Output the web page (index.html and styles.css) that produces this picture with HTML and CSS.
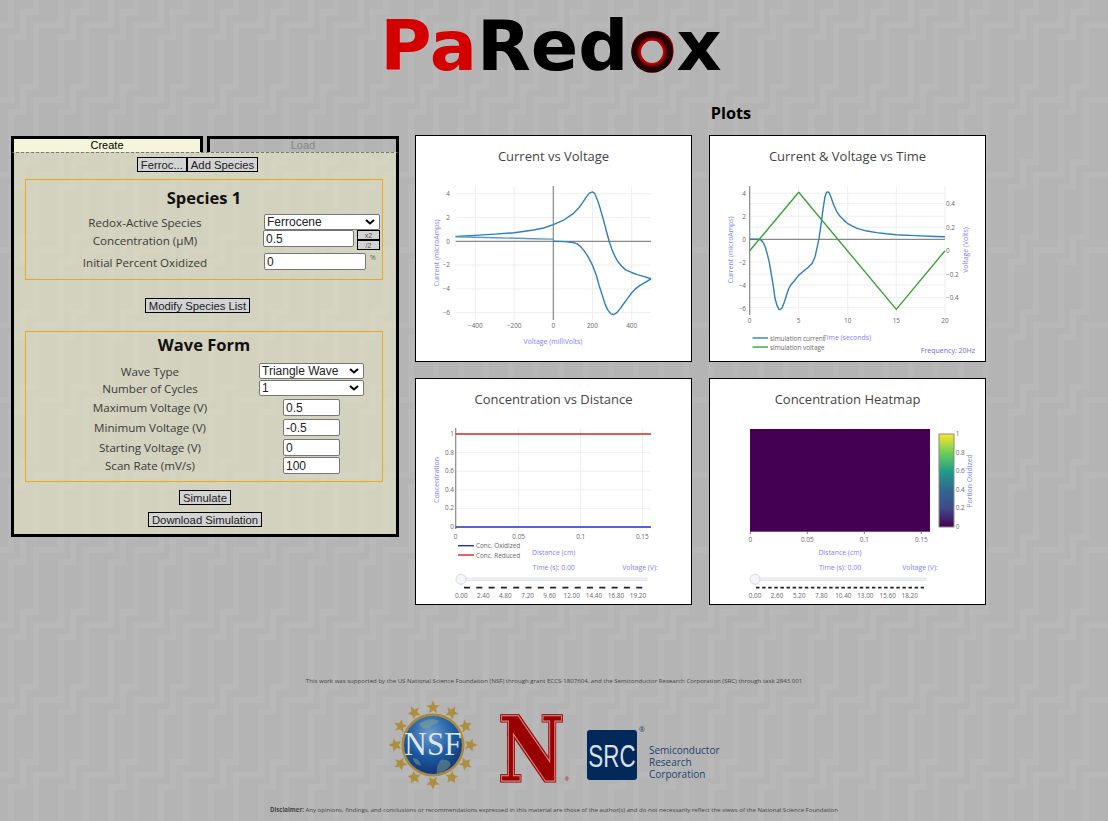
FILE: index.html
```html
<!DOCTYPE html>
<html lang="en">
<head>
  <meta charset="UTF-8" />
  <title>PaRedox</title>
  <link rel="stylesheet" href="styles.css">
</head>
<body>
  <header class="site-header">
    <h1 class="logo"><span class="logo-pa">Pa</span>Red<span class="logo-o">o<svg class="logo-ring" viewBox="0 0 44 44">
      <defs>
        <radialGradient id="ringFill" cx="50%" cy="50%" r="50%">
          <stop offset="52%" stop-color="#3a0000"/>
          <stop offset="72%" stop-color="#d00000"/>
          <stop offset="100%" stop-color="#200000"/>
        </radialGradient>
      </defs>
      <circle cx="22" cy="22" r="16" fill="none" stroke="url(#ringFill)" stroke-width="9.5"/>
      <circle cx="22" cy="22" r="11" fill="#b5b5b5"/>
    </svg></span>x</h1>
  </header>

  <main class="main">
    <section class="sim-panel">
      <div class="tabs">
        <div class="tab tab-active">Create</div>
        <div class="tab tab-off">Load</div>
      </div>
      <div class="tab-body">
        <div class="btn-row btn-row-left">
          <button type="button" class="btn">Ferroc...</button><button type="button" class="btn">Add Species</button>
        </div>

        <fieldset class="box species-box">
          <h2 class="box-title">Species 1</h2>
          <div class="row species-row">
            <label>Redox-Active Species</label>
            <select class="field field-select"><option>Ferrocene</option></select>
          </div>
          <div class="row species-row conc-row">
            <label>Concentration (µM)</label>
            <div class="conc-controls">
              <input class="field conc-input" type="text" value="0.5" />
              <div class="scale-btns">
                <button type="button" class="scale-btn">x2</button>
                <button type="button" class="scale-btn">/2</button>
              </div>
            </div>
          </div>
          <div class="row species-row pct-row">
            <label>Initial Percent Oxidized</label>
            <div class="pct-controls">
              <input class="field pct-input" type="text" value="0" />
              <span class="pct">%</span>
            </div>
          </div>
        </fieldset>

        <div class="btn-row btn-row-left modify-row">
          <button type="button" class="btn">Modify Species List</button>
        </div>

        <fieldset class="box wave-box">
          <h2 class="box-title">Wave Form</h2>
          <div class="row wave-row">
            <label>Wave Type</label>
            <select class="field field-select"><option>Triangle Wave</option></select>
          </div>
          <div class="row wave-row tight">
            <label>Number of Cycles</label>
            <select class="field field-select"><option>1</option></select>
          </div>
          <div class="row wave-row spaced">
            <label>Maximum Voltage (V)</label>
            <input class="field wave-input" type="text" value="0.5" />
          </div>
          <div class="row wave-row spaced">
            <label>Minimum Voltage (V)</label>
            <input class="field wave-input" type="text" value="-0.5" />
          </div>
          <div class="row wave-row spaced">
            <label>Starting Voltage (V)</label>
            <input class="field wave-input" type="text" value="0" />
          </div>
          <div class="row wave-row tight">
            <label>Scan Rate (mV/s)</label>
            <input class="field wave-input" type="text" value="100" />
          </div>
        </fieldset>

        <div class="btn-row simulate-row"><button type="button" class="btn">Simulate</button></div>
        <div class="btn-row download-row"><button type="button" class="btn">Download Simulation</button></div>
      </div>
    </section>

    <section class="plots">
      <h2 class="plots-title">Plots</h2>
      <div class="plot-grid">

        <!-- current vs voltage -->
        <div class="plot-card">
          <svg class="plot" viewBox="416 136 275 225">
            <text class="chart-title" x="553.5" y="161">Current vs Voltage</text>
            <path class="grid" d="M475.3 186V320M514.2 186V320M592.4 186V320M631.7 186V320M455.6 193.7H651M455.6 217.5H651M455.6 265.1H651M455.6 288.9H651M455.6 312.7H651"/>
            <path class="zero" d="M553.3 186V320M455.6 241.3H651"/>
            <g transform="translate(553.3 241.3) scale(.1955 -11.9)">
              <polyline class="line blue" points="-500,.4 -400,.5 -300,.6 -200,.72 -100,.95 -50,1.12 0,1.4 50,1.75 100,2.3 130,2.8 150,3.25 170,3.75 185,4.05 200,4.15 212,4.02 225,3.5 240,2.75 255,1.9 270,.95 285,.05 300,-.7 315,-1.25 330,-1.7 350,-2.1 370,-2.4 400,-2.62 430,-2.8 465,-2.97 500,-3.15"/>
              <polyline class="line blue" points="500,-3.15 470,-3.45 440,-3.75 420,-4 400,-4.35 380,-4.8 360,-5.25 340,-5.7 325,-6 310,-6.15 295,-6.1 280,-5.8 265,-5.3 250,-4.5 235,-3.75 220,-2.85 200,-2 180,-1.35 160,-.85 140,-.45 120,-.2 100,-.1 60,-.03 0,0"/>
              <polyline class="line blue-soft" points="-500,.38 -300,.3 -100,.22 0,.18"/>
            </g>
            <g class="tick tick-end">
              <text x="450" y="196">4</text><text x="450" y="220">2</text><text x="450" y="243.5">0</text><text x="450" y="267">−2</text><text x="450" y="291">−4</text><text x="450" y="315">−6</text>
            </g>
            <g class="tick tick-mid">
              <text x="475.3" y="328">−400</text><text x="514.2" y="328">−200</text><text x="553.3" y="328">0</text><text x="592.4" y="328">200</text><text x="631.7" y="328">400</text>
            </g>
            <text class="axis-title" x="553" y="344">Voltage (milliVolts)</text>
            <text class="axis-title" transform="translate(439 253) rotate(-90)">Current (microAmps)</text>
          </svg>
        </div>

        <!-- current and voltage vs time -->
        <div class="plot-card">
          <svg class="plot" viewBox="710 136 275 225">
            <text class="chart-title" x="847.5" y="161">Current &amp; Voltage vs Time</text>
            <path class="grid" d="M798.7 186V315M847.7 186V315M896.3 186V315M945 186V315M749.7 193.3H945M749.7 216.2H945M749.7 262.1H945M749.7 285H945M749.7 307.7H945M749.7 203.7H945M749.7 227.2H945M749.7 274.2H945M749.7 297.7H945"/>
            <path class="zero" d="M749.7 186V315M749.7 239.3H945"/>
            <g transform="translate(749.7 239.3) scale(9.77 -11.44)">
              <polyline class="line blue" points="0,0 .8,0 1,-.02 1.2,-.1 1.4,-.3 1.6,-.7 1.8,-1.3 2,-2 2.2,-3 2.4,-4 2.6,-5.2 2.8,-5.8 3,-6.12 3.1,-6.15 3.3,-6 3.5,-5.6 3.8,-4.8 4,-4.3 4.2,-4 4.6,-3.6 5,-3.15 5.5,-2.8 6,-2.45 6.4,-2.1 6.7,-1.5 6.9,-.7 7.1,.1 7.3,1.3 7.5,2.6 7.7,3.7 7.85,4.1 8,4.15 8.15,4.05 8.35,3.6 8.6,3 8.9,2.45 9.2,2.05 9.6,1.7 10,1.4 10.5,1.15 11,.95 12,.72 13,.58 14,.48 15,.4 17,.32 19,.25 20,.22"/>
            </g>
            <polyline class="line green" points="749.7,250.7 798.7,192.3 896.3,309.4 945,250.7"/>
            <g class="tick tick-end">
              <text x="746" y="196">4</text><text x="746" y="219">2</text><text x="746" y="242">0</text><text x="746" y="265">−2</text><text x="746" y="288">−4</text><text x="746" y="310.5">−6</text>
            </g>
            <g class="tick">
              <text x="946" y="206">0.4</text><text x="946" y="230">0.2</text><text x="946" y="253">0</text><text x="946" y="277">−0.2</text><text x="946" y="300">−0.4</text>
            </g>
            <g class="tick tick-mid">
              <text x="749.7" y="323">0</text><text x="798.7" y="323">5</text><text x="847.7" y="323">10</text><text x="896.3" y="323">15</text><text x="945" y="323">20</text>
            </g>
            <path class="line blue" d="M752.5 338H768"/>
            <path class="line green" d="M752.5 347H768"/>
            <text class="tick" x="770" y="341">simulation current</text>
            <text class="tick" x="770" y="350">simulation voltage</text>
            <text class="axis-title" x="847" y="339.5">Time (seconds)</text>
            <text class="freq" x="975" y="353">Frequency: 20Hz</text>
            <text class="axis-title" transform="translate(733 250) rotate(-90)">Current (microAmps)</text>
            <text class="axis-title" transform="translate(968 250) rotate(-90)">Voltage (Volts)</text>
          </svg>
        </div>

        <!-- concentration vs distance -->
        <div class="plot-card">
          <svg class="plot" viewBox="416 379 275 225">
            <text class="chart-title" x="553.5" y="404">Concentration vs Distance</text>
            <path class="grid" d="M518.7 428V527M580.7 428V527M642.3 428V527M455.7 452.6H651M455.7 471.2H651M455.7 489.8H651M455.7 508.4H651"/>
            <path class="zero" d="M455.7 428V529"/>
            <path class="line level red" d="M455.7 434H651"/>
            <path class="line level navy" d="M455.7 527H651"/>
            <g class="tick tick-end">
              <text x="454" y="436">1</text><text x="454" y="454.6">0.8</text><text x="454" y="473.2">0.6</text><text x="454" y="491.8">0.4</text><text x="454" y="510.4">0.2</text><text x="454" y="529">0</text>
            </g>
            <g class="tick tick-mid">
              <text x="455.7" y="539">0</text><text x="518.7" y="539">0.05</text><text x="580.7" y="539">0.1</text><text x="642.3" y="539">0.15</text>
            </g>
            <path class="line navy" d="M458 545.7H474"/>
            <path class="line red" d="M458 555H474"/>
            <text class="tick" x="476" y="548">Conc. Oxidized</text>
            <text class="tick" x="476" y="558">Conc. Reduced</text>
            <text class="axis-title" x="553.7" y="555">Distance (cm)</text>
            <text class="axis-title" transform="translate(439 480) rotate(-90)">Concentration</text>
            <text class="axis-title" x="553.7" y="570">Time (s): 0.00</text>
            <text class="axis-title" x="640" y="570">Voltage (V):</text>
            <rect class="track" x="461" y="578" width="186" height="2.5"/>
            <circle class="handle" cx="461" cy="579.3" r="5"/>
            <path class="dash-wide" d="M464 587.7H643"/>
            <g class="tick tick-mid">
              <text x="461.3" y="598">0.00</text><text x="483.3" y="598">2.40</text><text x="505.3" y="598">4.80</text><text x="527.7" y="598">7.20</text><text x="549.7" y="598">9.60</text><text x="571.7" y="598">12.00</text><text x="594" y="598">14.40</text><text x="616" y="598">16.80</text><text x="638" y="598">19.20</text>
            </g>
          </svg>
        </div>

        <!-- heatmap -->
        <div class="plot-card">
          <svg class="plot" viewBox="710 379 275 225">
            <defs>
              <linearGradient id="viridis" x1="0" y1="1" x2="0" y2="0">
                <stop offset="0" stop-color="#440154"/>
                <stop offset=".2" stop-color="#3e4a89"/>
                <stop offset=".4" stop-color="#31688e"/>
                <stop offset=".6" stop-color="#1f9e89"/>
                <stop offset=".8" stop-color="#6ece58"/>
                <stop offset="1" stop-color="#fde725"/>
              </linearGradient>
            </defs>
            <text class="chart-title" x="847.5" y="404">Concentration Heatmap</text>
            <rect class="heat" x="750" y="429" width="180" height="102.7"/>
            <path class="tick-mark" d="M750.3 531.7V534M807.3 531.7V534M864.3 531.7V534M921.3 531.7V534"/>
            <rect class="colorbar" x="939" y="434" width="15" height="93"/>
            <g class="tick">
              <text x="955.7" y="436">1</text><text x="955.7" y="454.6">0.8</text><text x="955.7" y="473.2">0.6</text><text x="955.7" y="491.8">0.4</text><text x="955.7" y="510.4">0.2</text><text x="955.7" y="529">0</text>
            </g>
            <g class="tick tick-mid">
              <text x="750.3" y="542">0</text><text x="807.3" y="542">0.05</text><text x="864.3" y="542">0.1</text><text x="921.3" y="542">0.15</text>
            </g>
            <text class="axis-title" x="840" y="555">Distance (cm)</text>
            <text class="axis-title" transform="translate(972 481) rotate(-90)">Portion Oxidized</text>
            <text class="axis-title" x="840" y="570">Time (s): 0.00</text>
            <text class="axis-title" x="920" y="570">Voltage (V):</text>
            <rect class="track" x="755" y="578" width="171" height="2.5"/>
            <circle class="handle" cx="755" cy="579.3" r="5"/>
            <path class="dash-narrow" d="M756 587.7H924"/>
            <g class="tick tick-mid">
              <text x="755" y="598">0.00</text><text x="777" y="598">2.60</text><text x="799.3" y="598">5.20</text><text x="821.3" y="598">7.80</text><text x="843.3" y="598">10.40</text><text x="865.3" y="598">13.00</text><text x="887.7" y="598">15.60</text><text x="909.7" y="598">18.20</text>
            </g>
          </svg>
        </div>

      </div>
    </section>
  </main>

  <footer class="site-footer">
    <p class="support">This work was supported by the US National Science Foundation (NSF) through grant ECCS-1807604, and the Semiconductor Research Corporation (SRC) through task 2843.001</p>
    <div class="sponsors">
      <svg class="logo-nsf" viewBox="0 0 88 90">
        <defs>
          <radialGradient id="globe" cx="45%" cy="30%" r="75%">
            <stop offset="0" stop-color="#6a9ccc"/>
            <stop offset=".55" stop-color="#1c5aa0"/>
            <stop offset="1" stop-color="#122f70"/>
          </radialGradient>
          <polygon id="star" points="0,-44.5 1.9,-40 6.5,-39.6 3,-36.5 4,-32 0,-34.4 -4,-32 -3,-36.5 -6.5,-39.6 -1.9,-40"/>
        </defs>
        <circle cx="44" cy="45" r="30" fill="none" stroke="#a98a3c" stroke-width="3"/>
        <g transform="translate(44 45)" fill="#ad8e3e">
          <use href="#star"/>
          <use href="#star" transform="rotate(30)"/>
          <use href="#star" transform="rotate(60)"/>
          <use href="#star" transform="rotate(90)"/>
          <use href="#star" transform="rotate(120)"/>
          <use href="#star" transform="rotate(150)"/>
          <use href="#star" transform="rotate(180)"/>
          <use href="#star" transform="rotate(210)"/>
          <use href="#star" transform="rotate(240)"/>
          <use href="#star" transform="rotate(270)"/>
          <use href="#star" transform="rotate(300)"/>
          <use href="#star" transform="rotate(330)"/>
        </g>
        <circle cx="44" cy="45" r="29" fill="url(#globe)"/>
        <path class="land" d="M30 24c6-5 14-6 20-3-2 4-7 3-9 6-3 3-8 2-11-3zM52 60c6-1 11 2 9 6-3 4-8 7-13 8-1-5 1-11 4-14zM24 58c4 0 7 3 8 8l-5-2c-2-2-3-4-3-6z"/>
        <text class="nsf-text" transform="translate(44 55) scale(.92 1)">NSF</text>
      </svg>

      <svg class="logo-n" viewBox="0 0 72 110">
        <defs>
          <filter id="nEdge" x="-10%" y="-10%" width="120%" height="120%">
            <feMorphology in="SourceAlpha" operator="dilate" radius="1.2" result="fat"/>
            <feFlood flood-color="#990000"/>
            <feComposite in2="fat" operator="in" result="edge"/>
            <feMerge>
              <feMergeNode in="edge"/>
              <feMergeNode in="SourceGraphic"/>
            </feMerge>
          </filter>
        </defs>
        <text class="n-glyph" transform="translate(32.5 88) scale(.8 1)">N</text>
        <text class="n-reg" x="66" y="88">®</text>
      </svg>

      <div class="src">
        <svg class="src-mark" viewBox="0 0 50 50">
          <rect width="50" height="50" rx="3" fill="#02295a"/>
          <text class="src-letters" transform="translate(25 36.5) scale(.7 1)">SRC</text>
        </svg>
        <span class="src-reg">®</span>
        <div class="src-name">Semiconductor<br>Research<br>Corporation</div>
      </div>
    </div>
    <p class="disclaimer"><strong>Disclaimer:</strong> Any opinions, findings, and conclusions or recommendations expressed in this material are those of the author(s) and do not necessarily reflect the views of the National Science Foundation</p>
  </footer>
</body>
</html>
```

FILE: styles.css
```css
* {
  box-sizing: border-box;
}

html, body {
  height: 100%;
}

body {
  margin: 0;
  overflow: hidden;
  font-family: "Open Sans", "Noto Sans", sans-serif;
  color: #000;
  background-color: #b4b4b4;
  background-image: url("data:image/svg+xml,%3Csvg xmlns='http://www.w3.org/2000/svg' width='50' height='75'%3E%3Cpath d='M11 75V37H23V12H36V0M36 75V25H50M0 25H11V0' fill='none' stroke='%23b8b8b8' stroke-width='6'/%3E%3C/svg%3E");
}

/* header */
.site-header {
  height: 97px;
  text-align: center;
}

.logo {
  margin: 0;
  padding-top: 6px;
  padding-right: 6px;
  font-family: "DejaVu Sans", sans-serif;
  font-size: 70px;
  font-weight: bold;
  line-height: 80px;
  color: #000;
}

.logo-pa {
  color: #d40000;
}

.logo-o {
  position: relative;
  color: #8a0000;
}

.logo-ring {
  position: absolute;
  left: 2px;
  top: 25px;
  width: 44px;
  height: 44px;
}

/* main layout */
.main {
  display: flex;
  align-items: flex-start;
  padding-left: 11px;
}

.sim-panel {
  width: 388px;
  margin-top: 39px;
  margin-right: 16px;
  flex: none;
}

.tabs {
  display: flex;
  justify-content: space-between;
  height: 16px;
}

.tab {
  width: 192px;
  border: 3px solid #000;
  border-bottom: none;
  font-family: "Liberation Sans", Arial, sans-serif;
  font-size: 11px;
  line-height: 13px;
  text-align: center;
}

.tab-active {
  background-color: #f5f5dc;
}

.tab-off {
  color: #858585;
}

.tab-body {
  height: 385px;
  padding-top: 4px;
  border: 3px solid #000;
  border-top: 1px dashed #777;
  background-color: rgba(240, 240, 200, 0.5);
}

.btn-row {
  display: flex;
  justify-content: center;
}

.btn-row-left {
  padding-right: 15px;
}

.modify-row {
  margin-top: 18px;
}

.simulate-row {
  margin-top: 8px;
}

.download-row {
  margin-top: 7px;
}

.btn {
  height: 15px;
  padding: 0 3px;
  border: 1px solid #000;
  background-color: #d3d3d3;
  color: #222;
  font-family: "Liberation Sans", Arial, sans-serif;
  font-size: 11.3px;
  line-height: 12px;
  white-space: nowrap;
}

.box {
  display: block;
  width: 358px;
  margin: 7px 0 0 11px;
  padding: 0;
  border: 1px solid #eda71c;
  min-width: 0;
}

.species-box {
  height: 101px;
}

.wave-box {
  height: 151px;
  margin-top: 18px;
}

.box-title {
  margin: 0;
  font-size: 16.5px;
  font-weight: bold;
  line-height: 24px;
  text-align: center;
  color: #111;
}

.species-box .box-title {
  padding-top: 6px;
  height: 33px;
}

.wave-box .box-title {
  padding-top: 1px;
  height: 31px;
}

.row {
  display: grid;
  align-items: center;
}

.row label {
  font-size: 11.6px;
  color: #3a3a3a;
  text-align: center;
  white-space: nowrap;
}

.species-row {
  grid-template-columns: 238px 116px;
  height: 16px;
}

.species-row label {
  padding-top: 2px;
}

.conc-row {
  height: 20px;
  margin-top: 1px;
  align-items: start;
}

.conc-row label {
  padding-top: 3px;
}

.pct-row {
  height: 17px;
  margin-top: 3px;
}

.wave-row {
  grid-template-columns: 233px 105px;
  height: 16px;
}

.wave-row label {
  padding-left: 15px;
}

.tight {
  margin-top: 1px;
}

.spaced {
  margin-top: 3px;
}

.wave-row.spaced,
.wave-row:last-child {
  height: 17px;
}

.field {
  height: 17px;
  padding: 0 2px;
  border: 1px solid #767676;
  border-radius: 2px;
  background-color: #fff;
  color: #222;
  font-family: "Liberation Sans", Arial, sans-serif;
  font-size: 12px;
}

.field-select {
  width: 100%;
  height: 16px;
  appearance: none;
  background-image: url("data:image/svg+xml,%3Csvg xmlns='http://www.w3.org/2000/svg' width='10' height='6'%3E%3Cpath d='M1 1l4 3.5L9 1' fill='none' stroke='%23000' stroke-width='2'/%3E%3C/svg%3E");
  background-repeat: no-repeat;
  background-position: right 4px center;
}

.conc-controls {
  display: flex;
  margin-left: -1px;
}

.conc-input {
  width: 91px;
}

.scale-btns {
  margin-left: 3px;
}

.scale-btn {
  display: block;
  width: 23px;
  height: 10px;
  padding: 0;
  border: 1px solid #000;
  background-color: #d3d3d3;
  color: #555;
  font-family: "Liberation Sans", Arial, sans-serif;
  font-size: 7px;
  line-height: 7px;
}

.pct-controls {
  display: flex;
  align-items: flex-start;
}

.pct-input {
  width: 102px;
}

.pct {
  margin-left: 4px;
  font-size: 7px;
  color: #666;
}

.wave-input {
  width: 57px;
  justify-self: center;
}

/* plots */
.plots {
  width: 632px;
}

.plots-title {
  margin: 0;
  height: 38px;
  padding-top: 4px;
  font-size: 16.3px;
  font-weight: bold;
  line-height: 24px;
  text-align: center;
}

.plot-grid {
  display: grid;
  grid-template-columns: 277px 277px;
  grid-template-rows: 227px 227px;
  column-gap: 17px;
  row-gap: 16px;
}

.plot-card {
  border: 1px solid #000;
  background-color: #fff;
}

.plot {
  display: block;
  width: 275px;
  height: 225px;
  font-family: "Open Sans", sans-serif;
}

.chart-title {
  font-size: 13px;
  fill: #444;
  text-anchor: middle;
}

.tick {
  font-size: 6.4px;
  fill: #666;
}

.tick-end {
  text-anchor: end;
}

.tick-mid {
  text-anchor: middle;
}

.axis-title {
  font-size: 6.9px;
  fill: #8080ff;
  text-anchor: middle;
}

.freq {
  font-size: 7px;
  fill: #6a6ad8;
  text-anchor: end;
}

.grid {
  fill: none;
  stroke: #eee;
  stroke-width: 1;
}

.zero {
  fill: none;
  stroke: #888;
  stroke-width: 1.2;
}

.line {
  fill: none;
  stroke-width: 1.4;
  stroke-linejoin: round;
  vector-effect: non-scaling-stroke;
}

.level {
  stroke-width: 1.7;
}

.blue {
  stroke: #2f7fb8;
}

.blue-soft {
  stroke: #5b9ac8;
}

.green {
  stroke: #3aa23a;
}

.red {
  stroke: #d62728;
}

.navy {
  stroke: #1f2fc0;
}

.heat {
  fill: #440154;
}

.colorbar {
  fill: url(#viridis);
  stroke: #888;
  stroke-width: 1;
}

.tick-mark {
  fill: none;
  stroke: #555;
  stroke-width: 0.8;
}

.track {
  fill: #f0f2f7;
  stroke: #d5dae8;
  stroke-width: 0.7;
}

.handle {
  fill: #f4f6fa;
  stroke: #d5dae8;
  stroke-width: 1;
}

.dash-wide {
  fill: none;
  stroke: #222;
  stroke-width: 1.8;
  stroke-dasharray: 6 6.3;
}

.dash-narrow {
  fill: none;
  stroke: #222;
  stroke-width: 1.8;
  stroke-dasharray: 3.5 2.6;
}

/* footer */
.site-footer {
  margin-top: 71px;
  text-align: center;
}

.support {
  margin: 0;
  font-size: 6.1px;
  line-height: 10px;
  color: #444;
}

.sponsors {
  display: flex;
  align-items: flex-start;
  height: 103px;
  margin-top: 16px;
  padding-left: 389px;
}

.logo-nsf {
  width: 88px;
  height: 90px;
  margin-top: -2px;
  flex: none;
}

.land {
  fill: #8fa98f;
  opacity: 0.45;
}

.nsf-text {
  font-family: "Liberation Serif", serif;
  font-size: 34px;
  fill: #dfe7f0;
  text-anchor: middle;
}

.logo-n {
  width: 72px;
  height: 110px;
  margin-left: 22px;
  margin-top: -9px;
  flex: none;
}

.n-glyph {
  font-family: "DejaVu Serif", serif;
  font-size: 90px;
  font-weight: bold;
  text-anchor: middle;
  fill: #990000;
  stroke: #d88a8a;
  stroke-width: 1;
  filter: url(#nEdge);
}

.n-reg {
  font-family: "Liberation Sans", sans-serif;
  font-size: 5px;
  fill: #990000;
}

.src {
  position: relative;
  display: flex;
  margin-left: 16px;
  margin-top: 28px;
}

.src-mark {
  width: 50px;
  height: 50px;
  flex: none;
}

.src-letters {
  font-family: "Liberation Sans", sans-serif;
  font-size: 32px;
  fill: #d8dfe8;
  text-anchor: middle;
}

.src-reg {
  position: absolute;
  left: 52px;
  top: -5px;
  font-size: 7px;
  color: #1d3f6e;
}

.src-name {
  margin-left: 12px;
  margin-top: 14px;
  font-size: 10px;
  line-height: 12px;
  text-align: left;
  color: #1d3f6e;
  white-space: nowrap;
}

.disclaimer {
  margin: 0;
  font-size: 6.07px;
  line-height: 10px;
  color: #444;
}
```
